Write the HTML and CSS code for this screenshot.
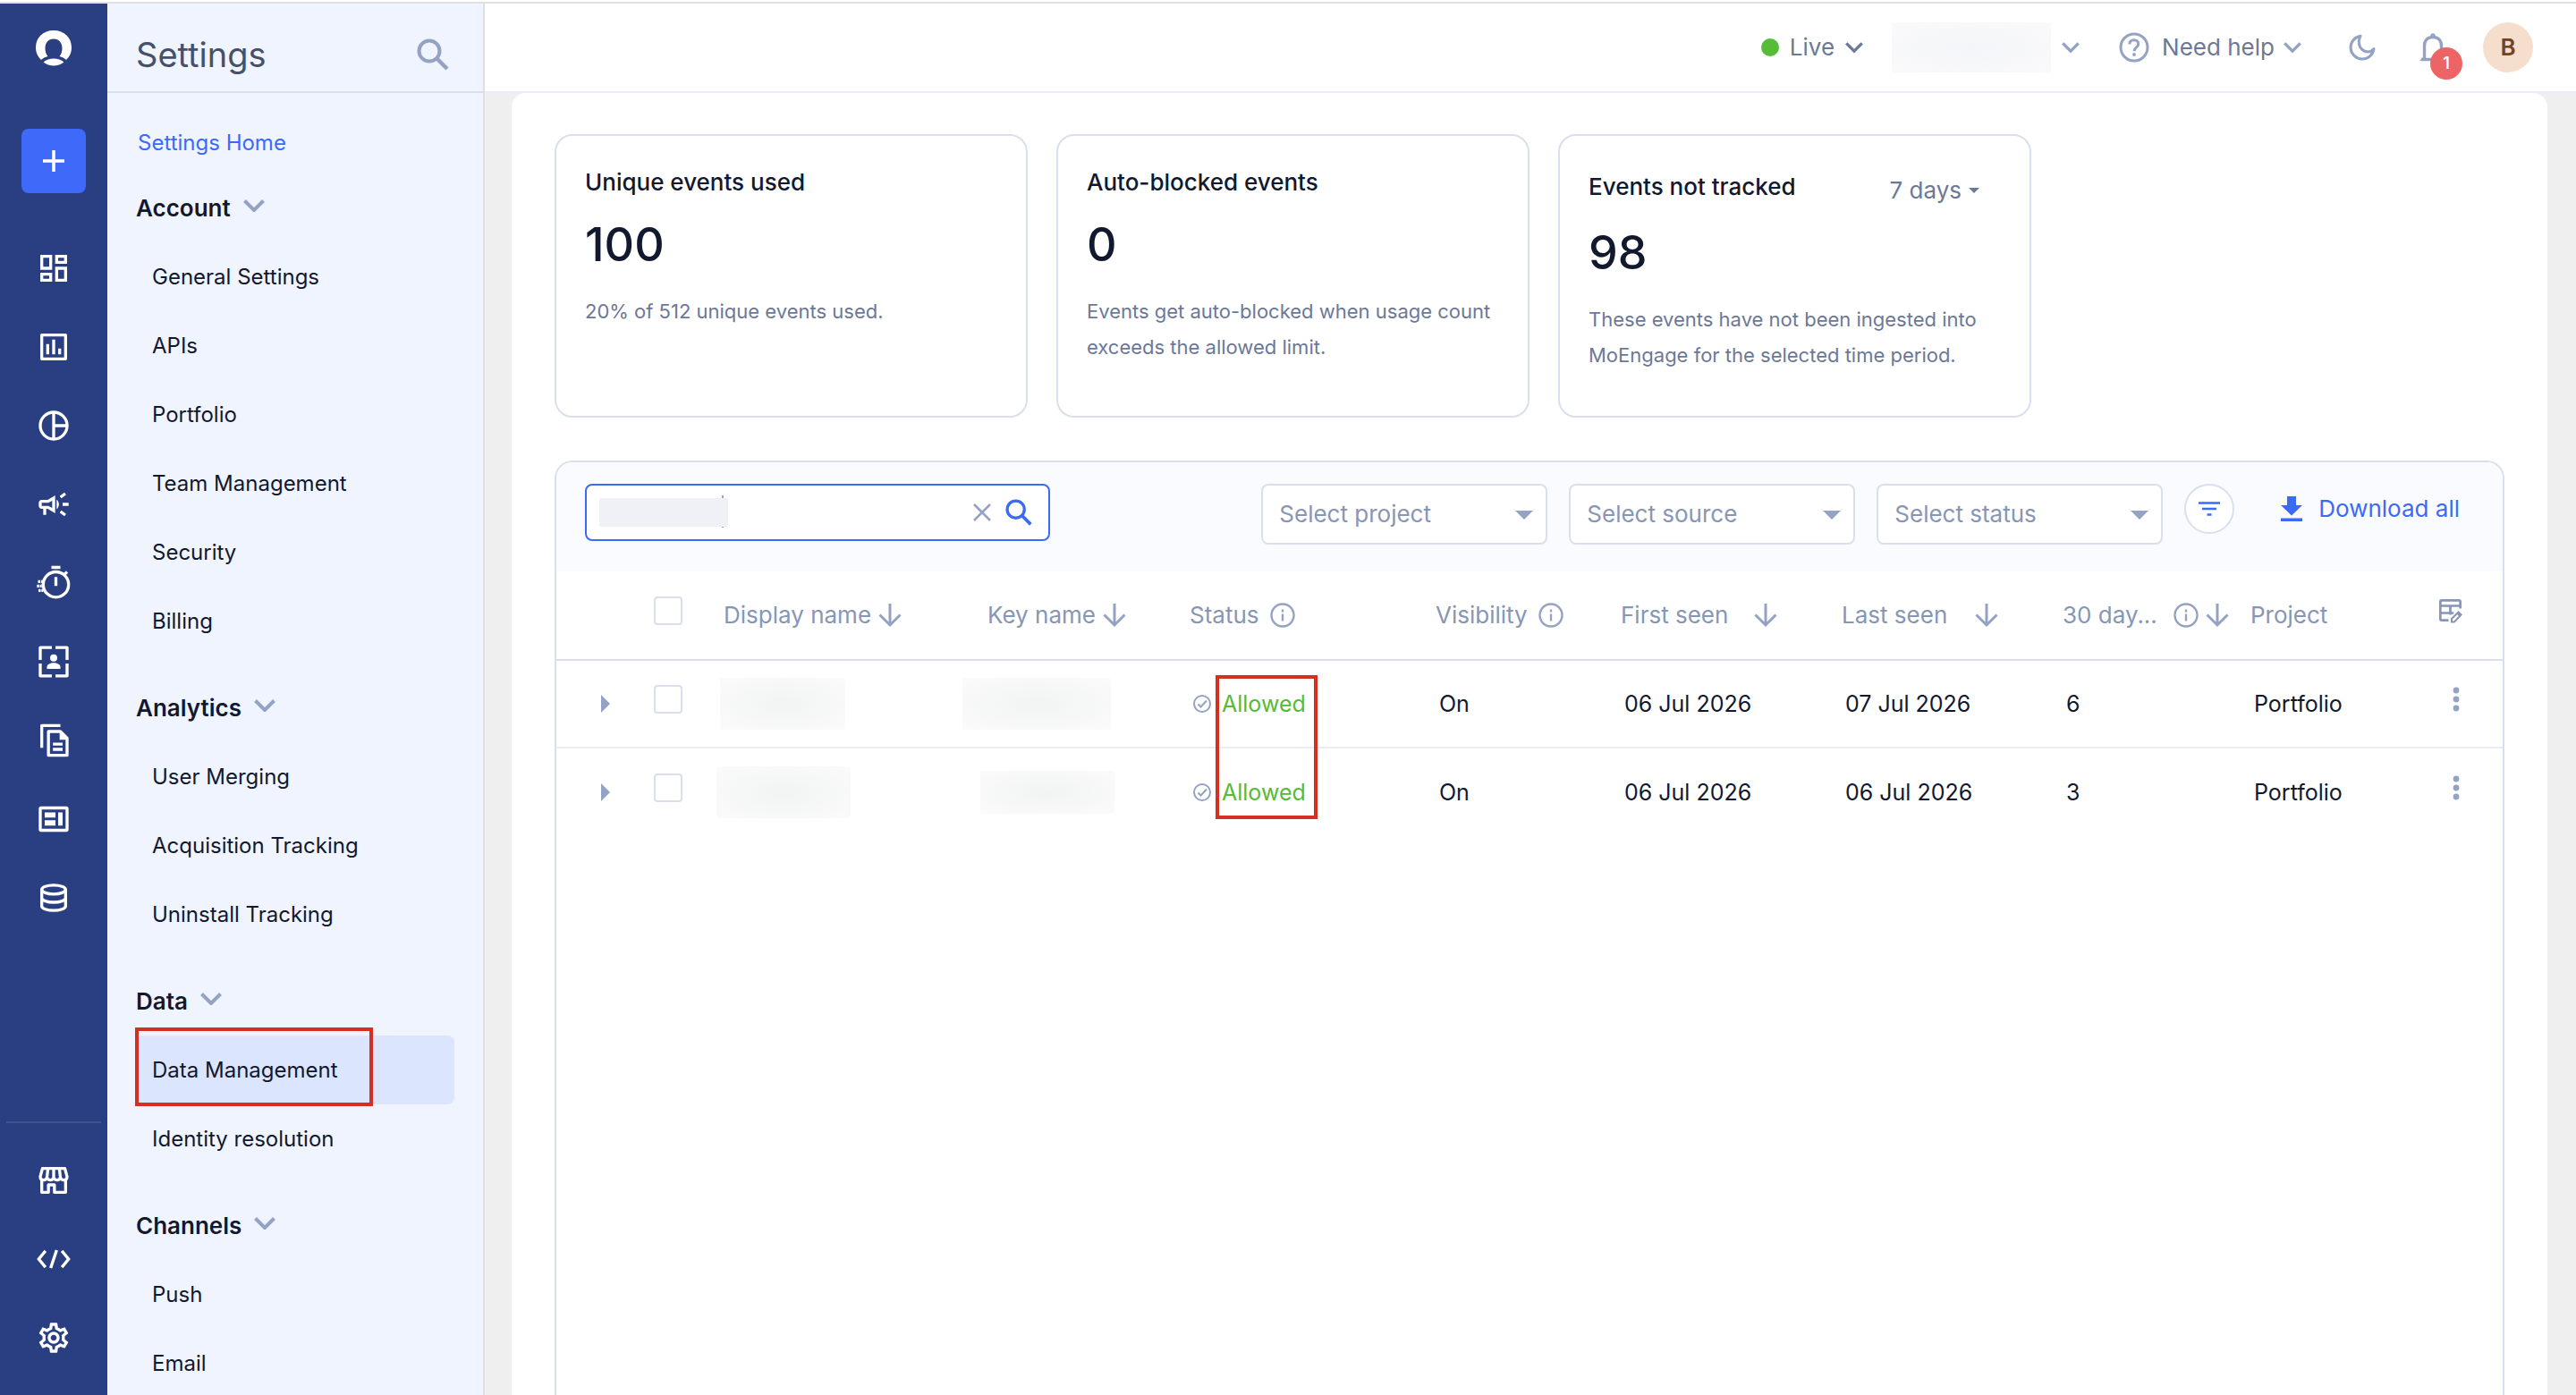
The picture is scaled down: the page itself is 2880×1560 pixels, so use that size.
FILE: index.html
```html
<!DOCTYPE html>
<html lang="en">
<head>
<meta charset="utf-8">
<title>Settings – Data Management</title>
<link rel="stylesheet" href="styles.css">
</head>
<body>
<svg class="sprite" aria-hidden="true">
  <symbol id="chevron" viewBox="0 0 24 14"><path d="M1.500 1.500 12 12 22.500 1.500" fill="none" stroke="currentColor" stroke-width="4"/></symbol>
  <symbol id="search" viewBox="0 0 36 36"><circle cx="14" cy="14" r="11.500" fill="none" stroke="currentColor" stroke-width="4"/><path d="M22.500 22.500 34 34" stroke="currentColor" stroke-width="4.500"/></symbol>
  <symbol id="sort" viewBox="0 0 26 28"><path d="M13 1v24M1.500 13.500 13 25l11.500-11.500" fill="none" stroke="currentColor" stroke-width="3"/></symbol>
  <symbol id="info" viewBox="0 0 28 28"><circle cx="14" cy="14" r="12.500" fill="none" stroke="currentColor" stroke-width="2.400"/><path d="M14 12.500v8M14 7.500v3" stroke="currentColor" stroke-width="2.400"/></symbol>
  <symbol id="down" viewBox="0 0 20 10"><path d="M0 0h20L10 10z" fill="currentColor"/></symbol>
  <symbol id="checked" viewBox="0 0 20 20"><circle cx="10" cy="10" r="9" fill="none" stroke="currentColor" stroke-width="2"/><path d="M5.500 10.500 8.500 13.500 15 6.500" fill="none" stroke="currentColor" stroke-width="2"/></symbol>
  <symbol id="dots" viewBox="0 0 8 28"><circle cx="4" cy="4" r="3.400" fill="currentColor"/><circle cx="4" cy="14" r="3.400" fill="currentColor"/><circle cx="4" cy="24" r="3.400" fill="currentColor"/></symbol>
</svg>
<div class="app">
  <nav class="rail" aria-label="Main">
    <a class="logo" href="#" aria-label="Home"><svg width="40" height="40" viewBox="0 0 40 40"><path d="M6 33C2 29 0 24.500 0 19.500 0 8 8 0 20 0s20 8 20 19.500C40 24.500 38 29 34 33c-2-2-4.500-3.200-7.500-4C28.500 27 29.500 23.500 29.500 20c0-6-3.500-10.500-9.500-10.500S10.500 14 10.500 20c0 3.500 1 7 3 9-3 .8-5.500 2-7.500 4z" fill="#fff"/><path d="M8.500 35.500c3-2.700 7-4 11.500-4s8.500 1.300 11.500 4c-3.500 2.800-7.500 4-11.500 4s-8-1.200-11.500-4z" fill="#fff"/></svg></a>
    <button class="create" aria-label="Create"><svg width="24" height="24" viewBox="0 0 24 24"><path d="M12 0v24M0 12h24" stroke="#fff" stroke-width="3.500"/></svg></button>
    <a class="rail-link" href="#" aria-label="Dashboards"><svg viewBox="0 0 24 24"><path fill="currentColor" d="M19 5v2h-4V5h4M9 5v6H5V5h4m10 8v6h-4v-6h4M9 17v2H5v-2h4M21 3h-8v6h8V3zM11 3H3v10h8V3zm10 8h-8v10h8V11zm-10 4H3v6h8v-6z"/></svg></a>
    <a class="rail-link" href="#" aria-label="Analyze"><svg viewBox="0 0 24 24"><path fill="none" stroke="currentColor" stroke-width="2" stroke-linejoin="round" d="M4 4h16v16H4zM8 17v-7M12 17V7M16 17v-4"/></svg></a>
    <a class="rail-link" href="#" aria-label="Segment"><svg viewBox="0 0 24 24"><g fill="none" stroke="currentColor" stroke-width="2"><circle cx="12" cy="12" r="9"/><path d="M12 3v18M12 12h9"/></g></svg></a>
    <a class="rail-link" href="#" aria-label="Engage"><svg viewBox="0 0 24 24"><path fill="currentColor" d="M18 11v2h4v-2zM16 17.610c.96.710 2.210 1.650 3.200 2.390l1.200-1.600-3.200-2.400zM20.400 5.600 19.200 4 16 6.400 17.200 8zM4 9c-1.100 0-2 .9-2 2v2c0 1.100.9 2 2 2h1v4h2v-4h1l5 3V6L8 9H4zm5.030 1.710L11 9.530v4.940l-1.970-1.180-.48-.29H4v-2h4.550zM15.500 12c0-1.330-.58-2.530-1.500-3.350v6.690c.92-.81 1.500-2.010 1.500-3.340z"/></svg></a>
    <a class="rail-link" href="#" aria-label="Real time"><svg viewBox="0 0 24 24"><g fill="none" stroke="currentColor" stroke-width="2"><circle cx="13.500" cy="13" r="8.500"/><path d="M10.500 1.500h6M13.500 8v6M19 6.500l2-2"/><path stroke-dasharray="1.500 .5" d="M1.500 11h3M.8 14h3.200M1.800 17h3.200"/></g></svg></a>
    <a class="rail-link" href="#" aria-label="Personalize"><svg viewBox="0 0 24 24"><path fill="none" stroke="currentColor" stroke-width="2" stroke-linejoin="round" d="M10.800 2.500H3v8.300M13.200 2.500H21v8.300M10.800 21.500H3v-8.300M13.200 21.500H21v-8.300"/><circle cx="12" cy="9.500" r="2.400" fill="currentColor"/><path fill="currentColor" d="M7.500 16.800v-1.300c0-1.800 2.500-2.700 4.500-2.700s4.500.9 4.500 2.700v1.300z"/></svg></a>
    <a class="rail-link" href="#" aria-label="Content"><svg viewBox="0 0 24 24"><path fill="none" stroke="currentColor" stroke-width="2" stroke-linejoin="round" d="M16.500 2H4v15M8.500 6h8l4.500 4.500V22H8.500zM11.500 14.500h6.500M11.500 18h6.500"/><path fill="currentColor" d="M16 6v5.500H21.500z"/></svg></a>
    <a class="rail-link" href="#" aria-label="Insights"><svg viewBox="0 0 24 24"><rect x="3" y="4.500" width="18" height="15" rx=".6" fill="none" stroke="currentColor" stroke-width="2"/><path fill="currentColor" d="M6 7.500h7.200v3.500H6zM6 12.800h7.200v3.500H6zM15 7.500h3v8.800h-3z"/></svg></a>
    <a class="rail-link" href="#" aria-label="Data"><svg viewBox="0 0 24 24"><g fill="none" stroke="currentColor" stroke-width="2"><ellipse cx="12" cy="6.500" rx="8" ry="3"/><path d="M4 6.500v11c0 1.700 3.600 3 8 3s8-1.300 8-3v-11M4 12c0 1.700 3.600 3 8 3s8-1.300 8-3"/></g></svg></a>
    <div class="rail-foot">
      <a class="rail-link" href="#" aria-label="App marketplace"><svg viewBox="0 0 24 24"><path fill="none" stroke="currentColor" stroke-width="2" stroke-linejoin="round" d="M4.500 4h15L21 9.500c0 1.500-1 2.300-2.200 2.300S16.500 11 16.500 9.800c0 1.200-1 2-2.200 2s-2.300-.8-2.300-2c0 1.200-1 2-2.200 2s-2.300-.8-2.300-2c0 1.200-1 2-2.300 2S3 11 3 9.500zM8.200 4l-.7 6M12 4v6M15.800 4l.7 6M4 12v8h4.500v-5h4v5H20v-8"/></svg></a>
      <a class="rail-link" href="#" aria-label="Developer"><svg viewBox="0 0 24 24"><path fill="none" stroke="currentColor" stroke-width="2" d="M6.500 6.500 2 12l4.500 5.500M17.500 6.500 22 12l-4.500 5.500M14 6l-4 12"/></svg></a>
      <a class="rail-link" href="#" aria-label="Settings"><svg viewBox="0 0 24 24"><path fill="currentColor" d="M19.430 12.980c.04-.32.070-.64.070-.98 0-.34-.03-.66-.07-.98l2.110-1.650c.19-.15.240-.42.120-.64l-2-3.460c-.09-.16-.26-.25-.44-.25-.06 0-.12.010-.17.030l-2.490 1c-.52-.4-1.080-.73-1.690-.98l-.38-2.650C14.460 2.180 14.250 2 14 2h-4c-.25 0-.46.180-.49.420l-.38 2.650c-.61.250-1.170.590-1.690.980l-2.490-1c-.06-.02-.12-.03-.18-.03-.17 0-.34.090-.43.250l-2 3.460c-.13.220-.07.490.120.640l2.110 1.650c-.04.320-.07.650-.07.980 0 .33.030.66.070.98l-2.110 1.650c-.19.150-.24.420-.12.640l2 3.460c.09.160.26.250.44.250.06 0 .12-.01.170-.03l2.490-1c.52.400 1.080.73 1.690.98l.38 2.650c.03.240.24.420.49.420h4c.25 0 .46-.18.490-.42l.38-2.650c.61-.25 1.170-.59 1.690-.98l2.490 1c.06.020.12.030.18.030.17 0 .34-.09.430-.25l2-3.460c.12-.22.070-.49-.12-.64l-2.110-1.650zm-1.980-1.710c.04.310.05.520.05.730 0 .21-.02.430-.05.730l-.14 1.130.89.700 1.080.84-.7 1.210-1.270-.51-1.040-.42-.9.680c-.43.320-.84.560-1.250.73l-1.060.43-.16 1.130-.2 1.350h-1.400l-.19-1.350-.16-1.130-1.060-.43c-.43-.18-.83-.41-1.230-.71l-.91-.7-1.060.43-1.270.51-.7-1.210 1.080-.84.890-.7-.14-1.130c-.03-.31-.05-.54-.05-.74s.02-.43.050-.73l.14-1.130-.89-.7-1.080-.84.7-1.210 1.270.51 1.040.42.900-.68c.43-.32.840-.56 1.250-.73l1.060-.43.160-1.130.2-1.350h1.390l.19 1.350.16 1.130 1.060.43c.43.180.83.410 1.230.71l.91.700 1.060-.43 1.270-.51.7 1.210-1.070.85-.89.700.14 1.130zM12 8c-2.210 0-4 1.790-4 4s1.790 4 4 4 4-1.790 4-4-1.790-4-4-4zm0 6c-1.100 0-2-.9-2-2s.9-2 2-2 2 .9 2 2-.9 2-2 2z"/></svg></a>
    </div>
  </nav>

  <aside class="settings">
    <div class="settings-head">
      <h1>Settings</h1>
      <button class="plain" aria-label="Search settings"><svg width="36" height="36"><use href="#search"/></svg></button>
    </div>
    <nav class="settings-nav" aria-label="Settings">
      <a class="home" href="#">Settings Home</a>
      <button class="group first">Account <svg width="24" height="14"><use href="#chevron"/></svg></button>
      <a class="item" href="#">General Settings</a>
      <a class="item" href="#">APIs</a>
      <a class="item" href="#">Portfolio</a>
      <a class="item" href="#">Team Management</a>
      <a class="item" href="#">Security</a>
      <a class="item" href="#">Billing</a>
      <button class="group">Analytics <svg width="24" height="14"><use href="#chevron"/></svg></button>
      <a class="item" href="#">User Merging</a>
      <a class="item" href="#">Acquisition Tracking</a>
      <a class="item" href="#">Uninstall Tracking</a>
      <button class="group">Data <svg width="24" height="14"><use href="#chevron"/></svg></button>
      <a class="item active" href="#" aria-current="page">Data Management<span class="callout callout-nav"></span></a>
      <a class="item" href="#">Identity resolution</a>
      <button class="group">Channels <svg width="24" height="14"><use href="#chevron"/></svg></button>
      <a class="item" href="#">Push</a>
      <a class="item" href="#">Email</a>
    </nav>
  </aside>

  <div class="content">
    <header class="topbar">
      <button class="plain env"><span class="live-dot"></span>Live<svg width="20" height="14"><use href="#chevron"/></svg></button>
      <button class="plain workspace" aria-label="Workspace"><span class="redacted"></span><svg width="20" height="14"><use href="#chevron"/></svg></button>
      <button class="plain help"><svg class="help-icon" width="34" height="34" viewBox="0 0 34 34"><circle cx="17" cy="17" r="15" fill="none" stroke="currentColor" stroke-width="3"/><path d="M11.800 13.500c0-3 2.200-4.800 5-4.800s5 1.800 5 4.500c0 3.600-4.800 4-4.800 8" fill="none" stroke="currentColor" stroke-width="3"/><circle cx="17" cy="25" r="1.900" fill="currentColor"/></svg>Need help<svg width="20" height="14"><use href="#chevron"/></svg></button>
      <button class="plain moon" aria-label="Dark mode"><svg width="32" height="32" viewBox="0 0 32 32"><path d="M14 3.200A13 13 0 1 0 29 17.500C25 22.500 19.500 21.500 16 18.500 11.500 14.500 11.500 8 14 3.200z" fill="none" stroke="currentColor" stroke-width="3" stroke-linejoin="round"/></svg></button>
      <button class="plain bell" aria-label="Notifications"><svg width="30" height="32" viewBox="0 0 30 32"><path d="M2 29.500h26M5.500 29V14.500C5.500 8 9.500 4.500 15 4.500s9.500 3.500 9.500 10V29" fill="none" stroke="currentColor" stroke-width="3.400"/><circle cx="15" cy="2.800" r="2.600" fill="currentColor"/><path d="M0 31l6-6v6z" fill="currentColor"/></svg><span class="badge">1</span></button>
      <button class="avatar" aria-label="Profile">B</button>
    </header>

    <main class="page">
      <section class="stats">
        <article class="card">
          <h2>Unique events used</h2>
          <p class="value">100</p>
          <p class="note">20% of 512 unique events used.</p>
        </article>
        <article class="card">
          <h2>Auto-blocked events</h2>
          <p class="value">0</p>
          <p class="note">Events get auto-blocked when usage count exceeds the allowed limit.</p>
        </article>
        <article class="card">
          <div class="card-head"><h2>Events not tracked</h2><button class="plain period">7 days <svg width="12" height="6"><use href="#down"/></svg></button></div>
          <p class="value">98</p>
          <p class="note">These events have not been ingested into MoEngage for the selected time period.</p>
        </article>
      </section>

      <section class="events">
        <div class="toolbar">
          <div class="searchbox">
            <span class="redacted"></span>
            <input type="text" aria-label="Search events">
            <button class="plain" aria-label="Clear"><svg width="20" height="20" viewBox="0 0 20 20"><path d="M1 1l18 18M19 1 1 19" stroke="currentColor" stroke-width="2.500"/></svg></button>
            <button class="plain go" aria-label="Search"><svg width="30" height="30"><use href="#search"/></svg></button>
          </div>
          <span class="select"><select aria-label="Project"><option>Select project</option></select><svg width="20" height="10"><use href="#down"/></svg></span>
          <span class="select"><select aria-label="Source"><option>Select source</option></select><svg width="20" height="10"><use href="#down"/></svg></span>
          <span class="select"><select aria-label="Status"><option>Select status</option></select><svg width="20" height="10"><use href="#down"/></svg></span>
          <button class="filter" aria-label="Filters"><svg width="24" height="16" viewBox="0 0 24 16"><path d="M0 1.500h24M4 8h16M9.500 14.500h5" stroke="currentColor" stroke-width="2.600"/></svg></button>
          <a class="download" href="#"><svg width="24" height="30" viewBox="0 0 24 30"><path d="M7 1h10v10h7L12 22.500 0 11h7zM0 25.500h24v3.500H0z" fill="currentColor"/></svg>Download all</a>
        </div>
        <table>
          <colgroup><col class="c-expand"><col class="c-check"><col class="c-name"><col class="c-key"><col class="c-status"><col class="c-vis"><col class="c-date"><col class="c-date"><col class="c-usage"><col><col class="c-more"></colgroup>
          <thead>
            <tr>
              <th></th>
              <th class="check"><input type="checkbox" aria-label="Select all"></th>
              <th><span class="head">Display name <svg class="near" width="26" height="28"><use href="#sort"/></svg></span></th>
              <th><span class="head">Key name <svg class="near" width="26" height="28"><use href="#sort"/></svg></span></th>
              <th><span class="head">Status <svg width="28" height="28"><use href="#info"/></svg></span></th>
              <th><span class="head">Visibility <svg width="28" height="28"><use href="#info"/></svg></span></th>
              <th><span class="head spread">First seen <svg width="26" height="28"><use href="#sort"/></svg></span></th>
              <th><span class="head spread">Last seen <svg width="26" height="28"><use href="#sort"/></svg></span></th>
              <th><span class="head usage"><span>30 day...</span><svg width="28" height="28"><use href="#info"/></svg><svg class="near" width="26" height="28"><use href="#sort"/></svg></span></th>
              <th>Project</th>
              <th class="more"><button class="plain" aria-label="Edit columns"><svg width="28" height="28" viewBox="0 0 28 28"><path d="M11.500 24.700H4Q2.300 24.700 2.300 23V4Q2.300 2.300 4 2.300h19Q24.700 2.300 24.700 4v7.500M2.300 8.500h22.400M2.300 16.500h15M13.500 8.500v10" fill="none" stroke="currentColor" stroke-width="2.700"/><path d="M15 26.500v-3.500l7.500-7.500 3 3L18 26.500z" fill="none" stroke="currentColor" stroke-width="2"/><path d="M20.500 17.500l2.500-2.500 3.500 3.500-2.500 2.500z" fill="currentColor"/></svg></button></th>
            </tr>
          </thead>
          <tbody>
            <tr>
              <td class="expand"><button class="plain" aria-label="Expand"><svg width="10" height="20" viewBox="0 0 10 20"><path d="M0 0l10 10L0 20z" fill="currentColor"/></svg></button></td>
              <td class="check"><input type="checkbox" aria-label="Select event 1"></td>
              <td class="hidden-text"><span class="redacted name-1"></span></td>
              <td class="hidden-text"><span class="redacted key-1"></span></td>
              <td><span class="status"><svg width="20" height="20"><use href="#checked"/></svg>Allowed<span class="callout callout-status"></span></span></td>
              <td>On</td><td>06 Jul 2026</td><td>07 Jul 2026</td><td>6</td><td>Portfolio</td>
              <td class="more"><button class="plain" aria-label="More"><svg width="8" height="28"><use href="#dots"/></svg></button></td>
            </tr>
            <tr>
              <td class="expand"><button class="plain" aria-label="Expand"><svg width="10" height="20" viewBox="0 0 10 20"><path d="M0 0l10 10L0 20z" fill="currentColor"/></svg></button></td>
              <td class="check"><input type="checkbox" aria-label="Select event 2"></td>
              <td class="hidden-text"><span class="redacted name-2"></span></td>
              <td class="hidden-text"><span class="redacted key-2"></span></td>
              <td><span class="status"><svg width="20" height="20"><use href="#checked"/></svg>Allowed</span></td>
              <td>On</td><td>06 Jul 2026</td><td>06 Jul 2026</td><td>3</td><td>Portfolio</td>
              <td class="more"><button class="plain" aria-label="More"><svg width="8" height="28"><use href="#dots"/></svg></button></td>
            </tr>
          </tbody>
        </table>
      </section>
    </main>
  </div>
</div>
</body>
</html>
```
FILE: styles.css
```css
:root {
  --ink: #12192f;
  --muted: #6c7897;
  --soft: #8796b5;
  --icon: #94a2c3;
  --line: #d9dfed;
  --blue: #3b6af8;
}
* { box-sizing: border-box; }
body {
  margin: 0;
  font: 24px/40px Inter, "Liberation Sans", sans-serif;
  color: var(--ink);
  background: #fff;
}
h1, h2, p { margin: 0; font-weight: 400; }
a { color: inherit; text-decoration: none; }
button, input, select { font: inherit; color: inherit; }
svg { display: block; flex: none; }
.sprite { display: none; }
.plain {
  display: flex;
  align-items: center;
  padding: 0;
  border: 0;
  background: none;
}
.app {
  display: flex;
  height: 100vh;
  padding-top: 2px;
  overflow: hidden;
}

/* Icon rail */
.rail {
  flex: none;
  display: flex;
  flex-direction: column;
  align-items: center;
  width: 120px;
  padding: 30px 0 20px;
  border-top: 2px solid #e0e0e0;
  background: #2a3e82;
  color: #fff;
}
.logo { margin-bottom: 70px; }
.create {
  display: grid;
  place-items: center;
  width: 72px;
  height: 72px;
  margin-bottom: 40px;
  border: 0;
  border-radius: 8px;
  background: #3f6af9;
}
.rail-link {
  display: grid;
  place-items: center;
  width: 106px;
  height: 88px;
}
.rail-link svg { width: 40px; height: 40px; }
.rail-foot {
  margin-top: auto;
  padding-top: 20px;
  border-top: 2px solid #40528f;
}

/* Settings navigation */
.settings {
  flex: none;
  width: 422px;
  border-top: 2px solid #e0e0e0;
  border-right: 2px solid #dddfe4;
  background: #f0f4ff;
}
.settings-head {
  display: flex;
  align-items: center;
  justify-content: space-between;
  height: 100px;
  padding: 16px 38px 0 32px;
  border-bottom: 2px solid var(--line);
  color: var(--icon);
}
.settings-head h1 {
  font-size: 38px;
  line-height: 48px;
  color: #465169;
}
.settings-nav {
  display: flex;
  flex-direction: column;
  padding: 36px 32px 0;
}
.home { padding-left: 2px; color: var(--blue); }
.group {
  display: flex;
  align-items: flex-end;
  gap: 14px;
  height: 97px;
  padding: 0 0 18px;
  border: 0;
  background: none;
  font-size: 26px;
  font-weight: 600;
}
.group.first { height: 91px; }
.group svg { margin-bottom: 16px; color: var(--icon); }
.item {
  position: relative;
  height: 77px;
  padding: 19px 18px 0;
  border-radius: 8px;
}
.active { background: #dbe5fd; }
.callout {
  position: absolute;
  border: 4px solid #d62f22;
}
.callout-nav { top: -9px; left: -1px; width: 266px; height: 88px; }

/* Top bar */
.content {
  flex: 1;
  display: flex;
  flex-direction: column;
  min-width: 0;
  background: #efefef;
}
.topbar {
  flex: none;
  display: flex;
  align-items: center;
  justify-content: flex-end;
  height: 102px;
  padding: 0 48px 0 0;
  border-top: 2px solid #e0e0e0;
  border-bottom: 2px solid #e8edfb;
  background: #fff;
  color: var(--icon);
  font-size: 26px;
}
.topbar .plain { gap: 10px; }
.topbar .env, .topbar .help { color: var(--muted); }
.topbar .env { gap: 12px; margin-right: 32px; }
.live-dot { width: 20px; height: 20px; border-radius: 50%; background: #56bb36; }
.redacted { display: block; border-radius: 2px; }
.workspace .redacted {
  width: 178px;
  height: 56px;
  background: radial-gradient(#f4f5f8, #fafafb);
}
.topbar .workspace { gap: 12px; margin-right: 44px; }
.topbar .help { margin-right: 52px; }
.help svg { color: var(--icon); }
.help-icon { margin-right: 4px; }
.moon { margin-right: 48px; }
.bell { position: relative; margin-right: 41px; }
.badge {
  position: absolute;
  top: 16px;
  left: 12px;
  width: 36px;
  height: 36px;
  border-radius: 50%;
  background: #ed6464;
  color: #fff;
  font-size: 18px;
  font-weight: 600;
  line-height: 36px;
  text-align: center;
}
.avatar {
  width: 56px;
  height: 56px;
  padding: 0;
  border: 0;
  border-radius: 50%;
  background: #f6decd;
  color: #74431f;
  font-weight: 600;
}

/* Page */
.page {
  flex: 1;
  display: flex;
  flex-direction: column;
  margin: 0 32px 0 30px;
  padding: 46px 48px 0;
  border-radius: 16px 16px 0 0;
  background: #fff;
}
.stats {
  display: grid;
  grid-template-columns: repeat(3, 529px);
  gap: 32px;
  margin-bottom: 48px;
}
.card {
  min-height: 317px;
  padding: 32px 30px 32px 32px;
  border: 2px solid var(--line);
  border-radius: 20px;
}
.card h2 { font-size: 26px; font-weight: 500; }
.card-head {
  display: flex;
  justify-content: space-between;
  padding: 5px 26px 4px 0;
}
.period {
  gap: 8px;
  height: 48px;
  margin-bottom: -8px;
  color: var(--muted);
  font-size: 26px;
}
.value {
  margin: 20px 0 24px;
  font-size: 52px;
  line-height: 60px;
  font-weight: 500;
}
.note { font-size: 22px; color: var(--muted); }

/* Events table */
.events {
  flex: 1;
  border: 2px solid var(--line);
  border-bottom: 0;
  border-radius: 20px 20px 0 0;
  overflow: hidden;
}
.toolbar {
  display: flex;
  align-items: flex-start;
  gap: 24px;
  height: 122px;
  padding: 24px 48px 0 32px;
  background: #fafbff;
}
.searchbox {
  isolation: isolate;
  display: flex;
  align-items: center;
  gap: 16px;
  width: 520px;
  height: 64px;
  margin-right: auto;
  padding: 0 18px 0 14px;
  border: 2px solid var(--blue);
  border-radius: 8px;
  background: #fff;
  color: var(--icon);
}
.searchbox .redacted {
  position: relative;
  width: 144px;
  height: 32px;
  background: #f0f1f6;
}
.searchbox .redacted::before {
  content: "";
  position: absolute;
  z-index: -1;
  top: -3px;
  right: 5px;
  width: 2px;
  height: 36px;
  background: var(--icon);
}
.searchbox input {
  flex: 1;
  min-width: 0;
  padding: 0;
  border: 0;
  outline: 0;
  background: none;
}
.go { color: var(--blue); }
.select { position: relative; width: 320px; }
.select select {
  appearance: none;
  width: 100%;
  height: 68px;
  padding: 0 48px 0 18px;
  border: 2px solid var(--line);
  border-radius: 8px;
  background: #fff;
  color: var(--soft);
  font-size: 26px;
}
.select svg {
  position: absolute;
  top: 30px;
  right: 16px;
  color: var(--icon);
  pointer-events: none;
}
.filter {
  display: grid;
  place-items: center;
  width: 56px;
  height: 56px;
  padding: 0;
  border: 2px solid var(--line);
  border-radius: 50%;
  background: #fff;
  color: var(--blue);
}
.download {
  display: flex;
  align-items: center;
  gap: 18px;
  height: 56px;
  padding-left: 28px;
  color: var(--blue);
  font-size: 26px;
}
table {
  width: 100%;
  table-layout: fixed;
  border-collapse: collapse;
}
.c-expand { width: 89px; }
.c-check { width: 74px; }
.c-name { width: 295px; }
.c-key { width: 226px; }
.c-status { width: 275px; }
.c-vis { width: 207px; }
.c-date { width: 247px; }
.c-usage { width: 210px; }
.c-more { width: 96px; }
th, td { padding: 0; text-align: left; white-space: nowrap; }
th {
  height: 99px;
  padding-left: 24px;
  border-bottom: 2px solid var(--line);
  color: var(--soft);
  font-size: 26px;
  font-weight: 400;
}
td { height: 98px; padding-left: 28px; font-size: 25px; }
tbody tr:first-child td { border-bottom: 2px solid #e8edfb; }
.head { display: flex; align-items: center; gap: 12px; }
.head svg { color: var(--icon); }
.head .near { margin-left: -4px; }
.head.spread { justify-content: space-between; padding-right: 48px; }
.head.usage span { width: 112px; }
td.expand { padding-left: 50px; color: var(--icon); }
th.check, td.check { padding: 0 0 10px 20px; }
.check input {
  appearance: none;
  display: block;
  width: 32px;
  height: 32px;
  margin: 0;
  border: 2px solid var(--line);
  border-radius: 4px;
  background: #fff;
}
th.more { padding: 0 0 10px 24px; }
th.more .plain { color: var(--soft); }
.more .plain { color: var(--icon); }
td.more { padding: 0 0 10px 40px; }
td.hidden-text { padding-left: 16px; }
td .redacted { height: 58px; background: radial-gradient(#f2f3f3, #fbfbfb); }
.name-1 { width: 140px; margin-left: 4px; }
.name-2 { width: 150px; }
.key-1 { width: 166px; margin-left: -20px; }
td .key-2 { width: 150px; height: 48px; }
.status {
  position: relative;
  display: flex;
  align-items: center;
  gap: 12px;
  color: #56bb36;
}
.status svg { color: var(--icon); }
.callout-status { top: -12px; left: 25px; width: 114px; height: 161px; }
```
